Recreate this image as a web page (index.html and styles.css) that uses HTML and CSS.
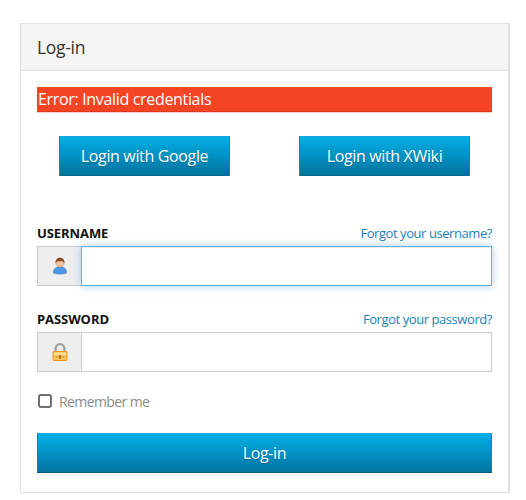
FILE: index.html
```html
<!DOCTYPE html>
<html lang="en">
<head>
<meta charset="utf-8">
<title>Log-in</title>
<link rel="stylesheet" href="styles.css">
</head>
<body>
<main class="panel">
  <h1 class="panel-title">Log-in</h1>
  <div class="panel-body">
    <div class="error">Error: Invalid credentials</div>
    <div class="providers">
      <button class="btn btn-provider" type="button">Login with Google</button>
      <button class="btn btn-provider" type="button">Login with XWiki</button>
    </div>
    <form class="login-form">
      <div class="field field-user">
        <div class="field-head">
          <label class="field-label" for="u">USERNAME</label>
          <a class="forgot" href="#">Forgot your username?</a>
        </div>
        <div class="input-group">
          <span class="addon">
            <svg class="icon" viewBox="0 0 16 18" aria-hidden="true">
              <path d="M2.600 13.500l-1.600 2.400 2 1zM13.400 13.500l1.600 2.400-2 1z" fill="#c98e5e"/>
              <path d="M1.600 15c0-2.200 1-3.600 2.600-4.200l1.500-.9h4.600l1.500.9c1.600.6 2.600 2 2.600 4.200 0 1.100-1.400 2-6.400 2S1.600 16.100 1.600 15z" fill="#4d9be8" stroke="#2f6fc0" stroke-width=".6"/>
              <circle cx="8" cy="5.800" r="4.100" fill="#f2c29a" stroke="#c08a5c" stroke-width=".5"/>
              <path d="M3.700 6.500C3 2.700 5.400.8 8 .8s5 1.900 4.300 5.700c-.6-1.700-1.600-2.500-2.700-2.600C8.200 4.500 6 4.300 5.200 4.300 4.600 4.700 4 5.500 3.700 6.500z" fill="#8a4a24"/>
            </svg>
          </span>
          <input class="input input-focus" id="u" type="text">
        </div>
      </div>
      <div class="field field-pass">
        <div class="field-head">
          <label class="field-label" for="p">PASSWORD</label>
          <a class="forgot" href="#">Forgot your password?</a>
        </div>
        <div class="input-group">
          <span class="addon">
            <svg class="icon" viewBox="0 0 16 18" aria-hidden="true">
              <path d="M3.600 9V5.500a4.400 4.400 0 0 1 8.800 0V9" fill="none" stroke="#9c9c9c" stroke-width="2.100"/>
              <rect x="1" y="8.500" width="14" height="9" rx=".6" fill="#f6c25a" stroke="#f0921c" stroke-width="1"/>
              <rect x="2" y="9.500" width="12" height="2.500" fill="#fbdc90"/>
              <path d="M4 14h1.200M10.800 14H12M7.300 12.500h1.400v2.800H7.300z" stroke="#a86f14" stroke-width=".9" fill="#a86f14"/>
            </svg>
          </span>
          <input class="input" id="p" type="password">
        </div>
      </div>
      <label class="remember"><input class="check" type="checkbox"><span>Remember me</span></label>
      <button class="btn btn-submit" type="button">Log-in</button>
    </form>
  </div>
</main>
</body>
</html>
```

FILE: styles.css
```css
* { box-sizing: border-box; }
html, body { margin: 0; background: #fff; }
body {
  padding: 23px 16px 0 20px;
  font-family: "Open Sans", "Liberation Sans", sans-serif;
  color: #222;
}
.panel {
  height: 470px;
  border: 1px solid #e0e0e0;
  border-right-width: 2px;
}
.panel-title {
  margin: 0;
  height: 47px;
  padding: 0 16px;
  background: #f4f4f4;
  border-bottom: 1px solid #e2e2e2;
  font-size: 17.500px;
  letter-spacing: -.3px;
  font-weight: 400;
  line-height: 46px;
  color: #333;
}
.panel-body { padding: 16px 16px 0; }
.error {
  height: 25px;
  padding-left: 1px;
  background: #f44424;
  border-bottom: 1px solid #e0371a;
  box-shadow: 0 1px 0 #fbd2ca;
  color: #fff;
  font-size: 16px;
  letter-spacing: -.33px;
  line-height: 25px;
  white-space: nowrap;
}
.providers {
  display: flex;
  justify-content: space-between;
  padding: 24px 22px 0;
}
.btn {
  display: block;
  height: 40px;
  padding: 0;
  border: 1px solid #0b86b8;
  border-top-color: #1aa6d8;
  border-bottom-color: #05688f;
  border-radius: 0;
  background: linear-gradient(#02aee6, #0274a0);
  color: #fff;
  font-family: inherit;
  font-size: 16px;
  letter-spacing: -.35px;
  font-weight: 400;
  text-shadow: 0 1px 1px rgba(0, 0, 0, .2);
}
.btn-provider { width: 171px; }
.btn-submit { width: 100%; margin-top: 22px; border-bottom-color: #03577a; }
.field-user { margin-top: 47px; }
.field-pass { margin-top: 23px; }
.field-head {
  display: flex;
  justify-content: space-between;
  align-items: baseline;
  height: 23px;
}
.field-label {
  font-size: 13px;
  letter-spacing: -.08px;
  font-weight: 700;
  color: #111;
  line-height: 20px;
}
.forgot {
  color: #1a82b8;
  font-size: 13px;
  letter-spacing: -.43px;
  text-decoration: none;
  line-height: 20px;
}
.input-group { display: flex; height: 40px; }
.addon {
  flex: none;
  width: 44px;
  display: flex;
  align-items: center;
  justify-content: center;
  background: #eee;
  border: 1px solid #ccc;
  border-right: 0;
}
.icon { width: 16px; height: 18px; display: block; }
.input {
  flex: 1;
  min-width: 0;
  margin: 0;
  padding: 0 8px;
  border: 1px solid #ccc;
  background: #fff;
  border-radius: 0;
  outline: 0;
}
.input-focus {
  border-color: #66afe9;
  box-shadow: inset 0 1px 1px rgba(0, 0, 0, .075), 0 0 8px rgba(102, 175, 233, .6);
}
.remember {
  display: flex;
  align-items: center;
  margin-top: 19px;
  height: 20px;
  font-size: 14px;
  letter-spacing: -.6px;
  color: #8a8a8a;
}
.check {
  width: 14px;
  height: 14px;
  margin: 0 7px 0 1px;
  appearance: none;
  background: #fff;
  border: 2px solid #6f6f6f;
  border-radius: 3px;
}
```
